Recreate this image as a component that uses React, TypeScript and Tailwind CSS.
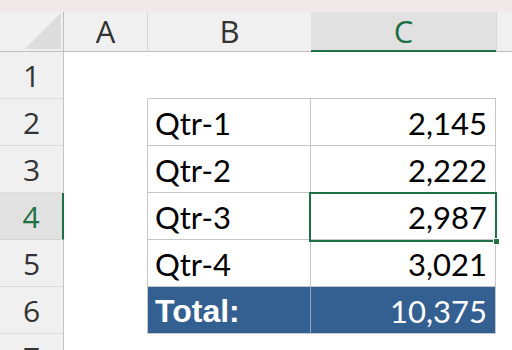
import React from 'react';

const rows = [
  { n: 2, label: 'Qtr-1', value: '2,145' },
  { n: 3, label: 'Qtr-2', value: '2,222' },
  { n: 4, label: 'Qtr-3', value: '2,987' },
  { n: 5, label: 'Qtr-4', value: '3,021' },
];

const headFont = { fontFamily: '"Open Sans", "Noto Sans", sans-serif' };
const cellFont = { fontFamily: 'Lato, "Liberation Sans", sans-serif' };

const RowHead = ({ n, active }: { n: number; active?: boolean }) => (
  <div
    className={`flex items-center justify-center text-[30px] border-b ${
      active
        ? 'bg-[#e1e1e1] text-[#1e7145] border-b-[#d4d4d4] border-r-2 border-r-[#1e7145]'
        : 'bg-[#f0f0f0] text-[#333] border-b-[#dcdcdc] border-r border-r-[#c4c4c4]'
    }`}
    style={headFont}
  >
    {n}
  </div>
);

export default function App() {
  return (
    <div className="w-[512px] h-[350px] overflow-hidden bg-white">
      <div className="h-[12px] bg-[#efe9e7]" />
      <div className="relative grid grid-cols-[64px_84px_163px_185px_1fr] grid-rows-[40px_47px_47px_47px_47px_47px_47px_47px]">
        {/* header row */}
        <div className="relative bg-[#f0f0f0] border-b border-r border-[#c0c0c0]">
          <svg className="absolute right-[2px] bottom-[2px]" width="36" height="36" viewBox="0 0 36 36">
            <polygon points="36,0 36,36 0,36" fill="#dcdcdc" />
          </svg>
        </div>
        <div className="flex items-center justify-center bg-[#f0f0f0] text-[31px] text-[#333] border-b border-r border-b-[#bdbdbd] border-r-[#d6d6d6]" style={headFont}>
          A
        </div>
        <div className="flex items-center justify-center bg-[#f0f0f0] text-[31px] text-[#333] border-b border-b-[#bdbdbd]" style={headFont}>
          B
        </div>
        <div className="flex items-center justify-center bg-[#e1e1e1] text-[31px] text-[#1e7145] border-b-2 border-b-[#1e7145]" style={headFont}>
          C
        </div>
        <div className="bg-[#f0f0f0] border-b border-l border-b-[#bdbdbd] border-l-[#d6d6d6]" />

        {/* row 1 */}
        <RowHead n={1} />
        <div />
        <div className="border-b border-[#c6c6c6]" />
        <div className="border-b border-[#c6c6c6]" />
        <div />

        {rows.map((r) => (
          <React.Fragment key={r.n}>
            <RowHead n={r.n} active={r.n === 4} />
            <div className="border-r border-[#c6c6c6]" />
            <div className="flex items-center pl-[7px] pt-[2px] text-[31px] text-black border-r border-b border-[#c6c6c6]" style={cellFont}>
              {r.label}
            </div>
            <div className="flex items-center justify-end pr-[8px] pt-[2px] text-[31px] text-black border-r border-b border-[#c6c6c6]" style={cellFont}>
              {r.value}
            </div>
            <div />
          </React.Fragment>
        ))}

        {/* row 6 total */}
        <RowHead n={6} />
        <div className="border-r border-[#c6c6c6]" />
        <div
          className="flex items-center pl-[7px] pt-[1px] bg-[#335f91] text-white text-[32px] font-bold border-r border-b border-r-[#8ea3bd] border-b-[#c6c6c6]"
          style={{ fontFamily: '"Liberation Sans", Arial, sans-serif' }}
        >
          Total:
        </div>
        <div className="flex items-center justify-end pr-[8px] pt-[2px] bg-[#335f91] text-white text-[31px] border-r border-b border-[#c6c6c6]" style={cellFont}>
          10,375
        </div>
        <div />

        {/* row 7 */}
        <RowHead n={7} />
        <div />
        <div />
        <div />
        <div />

        {/* selection overlay on C4 */}
        <div className="pointer-events-none absolute left-[309px] top-[180px] w-[188px] h-[50px] border-2 border-[#1e7145]" />
        <div className="pointer-events-none absolute left-[493px] top-[226px] w-[7px] h-[7px] bg-[#1e7145] border border-white" />
      </div>
    </div>
  );
}
